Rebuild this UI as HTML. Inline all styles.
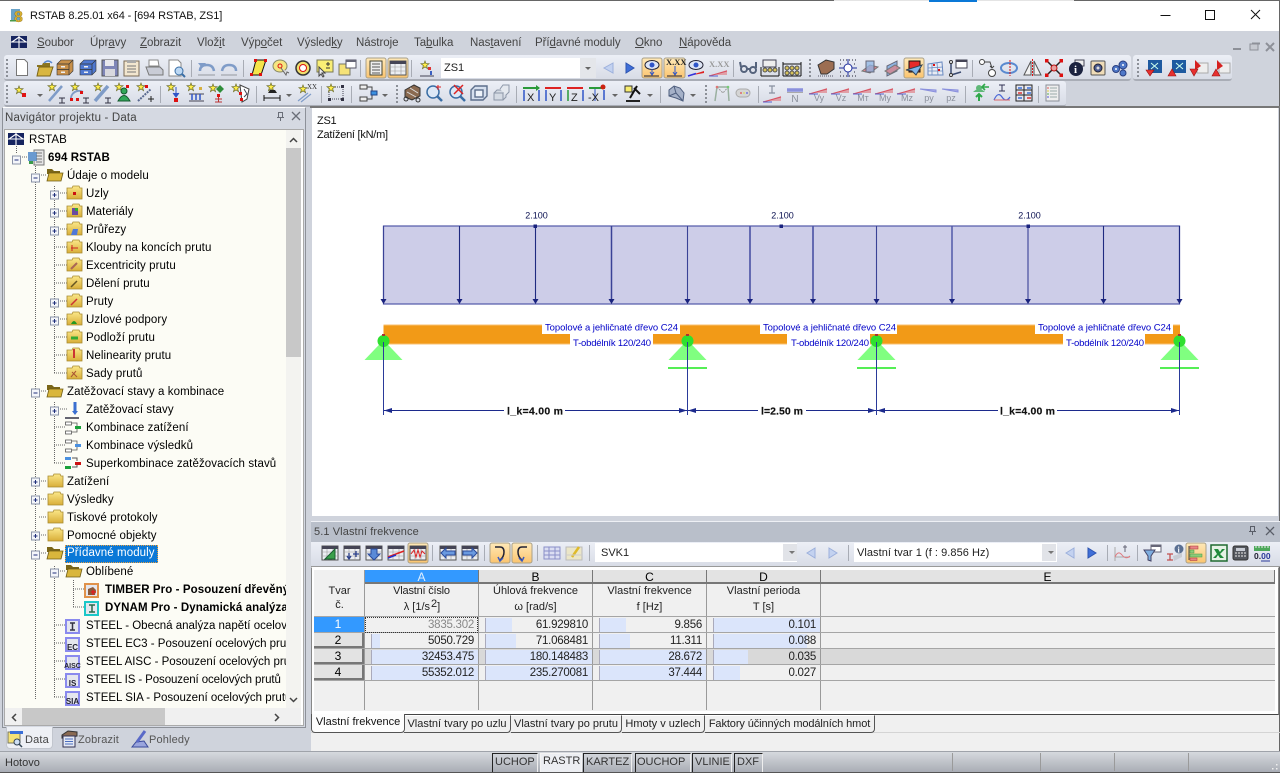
<!DOCTYPE html>
<html lang="cs"><head><meta charset="utf-8"><title>RSTAB 8.25.01 x64 - [694 RSTAB, ZS1]</title>
<style>
html,body{margin:0;padding:0;width:1280px;height:773px;overflow:hidden;background:#cfd3dc;font:11px "Liberation Sans",sans-serif;color:#000}
div,span,i{position:absolute;box-sizing:border-box;white-space:nowrap}
u,b{position:static}
i{display:block}
.m{top:31px;height:24px;line-height:25px;color:#444;font-size:11.5px;letter-spacing:-.05px}
.tb{background:linear-gradient(#ecEff6,#d8dce6);border-bottom:2px solid #a9adb6;border-radius:3px}
.t{height:18px;line-height:18px;letter-spacing:.09px;font-size:11.5px;margin-top:1px}
.hd{background:#e3e3e3;border-right:1px solid #777;border-bottom:2px solid #777;text-align:center;line-height:14px;font-size:12px;height:14px;top:570px}
.h2{text-align:center;width:113px;line-height:16px;color:#222;font-size:11px}
.c{height:15px;width:113px;line-height:16px;text-align:right;padding-right:4px;font-size:11.5px;color:#222;letter-spacing:-.25px}
.c i{top:1px;height:14px;left:6px;background:#dbe5fb;border-left:1px solid #aab}
.c span{position:relative}
.r{left:314px;width:50px;height:15px;background:#e3e3e3;border-right:2px solid #777;border-bottom:2px solid #777;text-align:center;line-height:14px;font-size:12px}
.vl{width:1px;background:#9a9a9a}.hl{height:1px;background:#a5a5a5;left:314px;width:961px}
.tab{top:715px;height:18px;background:#f0f0f0;border:1px solid #555;border-top:1px solid #fff;border-left:0;border-radius:0 0 4px 0;line-height:17px;text-align:center;color:#222;font-size:11px}
.st{top:753px;height:19px;border:1px solid #222;border-bottom:0;border-right-color:#eee;line-height:17px;padding-left:2px;color:#333;font-size:11px}
.ic{left:0;top:0;position:absolute}
</style></head><body>

<!-- title bar -->
<div style="left:0;top:0;width:1280px;height:31px;background:#fff"></div>
<div style="left:0;top:0;width:834px;height:1px;background:#666"></div>
<div style="left:834px;top:0;width:95px;height:1px;background:#e4e4e4"></div>
<div style="left:929px;top:0;width:48px;height:2px;background:#0a78d7"></div>
<div style="left:977px;top:0;width:97px;height:1px;background:#e4e4e4"></div>
<div style="left:1074px;top:0;width:206px;height:1px;background:#666"></div>
<div style="left:1279px;top:0;width:1px;height:773px;background:#666"></div>
<div style="left:30px;top:7px;line-height:18px;font-size:11px;letter-spacing:-.1px;color:#111">RSTAB 8.25.01 x64 - [694 RSTAB, ZS1]</div>

<!-- menu -->
<div class="m" style="left:37px"><u>S</u>oubor</div>
<div class="m" style="left:90px">Úpr<u>a</u>vy</div>
<div class="m" style="left:140px"><u>Z</u>obrazit</div>
<div class="m" style="left:197px">Vlož<u>i</u>t</div>
<div class="m" style="left:241px">Výp<u>o</u>čet</div>
<div class="m" style="left:297px">Výsled<u>k</u>y</div>
<div class="m" style="left:356px">Nástro<u>j</u>e</div>
<div class="m" style="left:414px">Ta<u>b</u>ulka</div>
<div class="m" style="left:470px">Nas<u>t</u>avení</div>
<div class="m" style="left:535px">Pří<u>d</u>avné moduly</div>
<div class="m" style="left:635px"><u>O</u>kno</div>
<div class="m" style="left:679px"><u>N</u>ápověda</div>

<!-- toolbars -->
<div class="tb" style="left:4px;top:55px;width:1127px;height:26px"></div>
<div class="tb" style="left:1133px;top:55px;width:99px;height:26px"></div>
<div class="tb" style="left:4px;top:81px;width:1062px;height:26px"></div>

<!-- combo in toolbar -->
<div style="left:441px;top:58px;width:155px;height:20px;background:#fff;line-height:21px;padding-left:3px;color:#222">ZS1</div>
<div style="left:580px;top:58px;width:16px;height:20px;background:#e4e6ea"></div>

<!-- navigator -->
<div style="left:2px;top:107px;width:304px;height:621px;background:#d5d9e2;border:1px solid #8d9199;border-top-color:#fff"></div>
<div style="left:5px;top:109px;line-height:19px;color:#444;font-size:11.5px;letter-spacing:.16px">Navigátor projektu - Data</div>
<div style="left:4px;top:129px;width:300px;height:597px;background:#fff;border:1px solid #aaa"></div>
<div style="left:5px;top:130px;width:281px;height:578px;background:#fcfcf5;overflow:hidden">
 <div class="t" style="left:24px;top:0">RSTAB</div>
 <div class="t" style="left:43px;top:18px;font-weight:bold">694 RSTAB</div>
 <div class="t" style="left:62px;top:36px">Údaje o modelu</div>
 <div class="t" style="left:81px;top:54px">Uzly</div>
 <div class="t" style="left:81px;top:72px">Materiály</div>
 <div class="t" style="left:81px;top:90px">Průřezy</div>
 <div class="t" style="left:81px;top:108px">Klouby na koncích prutu</div>
 <div class="t" style="left:81px;top:126px">Excentricity prutu</div>
 <div class="t" style="left:81px;top:144px">Dělení prutu</div>
 <div class="t" style="left:81px;top:162px">Pruty</div>
 <div class="t" style="left:81px;top:180px">Uzlové podpory</div>
 <div class="t" style="left:81px;top:198px">Podloží prutu</div>
 <div class="t" style="left:81px;top:216px">Nelinearity prutu</div>
 <div class="t" style="left:81px;top:234px">Sady prutů</div>
 <div class="t" style="left:62px;top:252px">Zatěžovací stavy a kombinace</div>
 <div class="t" style="left:81px;top:270px">Zatěžovací stavy</div>
 <div class="t" style="left:81px;top:288px">Kombinace zatížení</div>
 <div class="t" style="left:81px;top:306px">Kombinace výsledků</div>
 <div class="t" style="left:81px;top:324px">Superkombinace zatěžovacích stavů</div>
 <div class="t" style="left:62px;top:342px">Zatížení</div>
 <div class="t" style="left:62px;top:360px">Výsledky</div>
 <div class="t" style="left:62px;top:378px">Tiskové protokoly</div>
 <div class="t" style="left:62px;top:396px">Pomocné objekty</div>
 <div class="t" style="left:60px;top:414px;width:93px;height:18px;padding-left:2px;background:#0a78d7;color:#fff;outline:1px dotted #e8a040;outline-offset:-1px;line-height:17px">Přídavné moduly</div>
 <div class="t" style="left:81px;top:432px">Oblíbené</div>
 <div class="t" style="left:100px;top:450px;font-weight:bold">TIMBER Pro - Posouzení dřevěných prutů</div>
 <div class="t" style="left:100px;top:468px;font-weight:bold">DYNAM Pro - Dynamická analýza konstrukcí</div>
 <div class="t" style="left:81px;top:486px;letter-spacing:0">STEEL - Obecná analýza napětí ocelových prutů</div>
 <div class="t" style="left:81px;top:504px;letter-spacing:0">STEEL EC3 - Posouzení ocelových prutů</div>
 <div class="t" style="left:81px;top:522px;letter-spacing:0">STEEL AISC - Posouzení ocelových prutů</div>
 <div class="t" style="left:81px;top:540px;letter-spacing:-.1px">STEEL IS - Posouzení ocelových prutů</div>
 <div class="t" style="left:81px;top:558px;letter-spacing:0">STEEL SIA - Posouzení ocelových prutů</div>
</div>
<!-- scrollbars -->
<div style="left:286px;top:130px;width:15px;height:578px;background:#f3f3f0"></div>
<div style="left:286px;top:148px;width:15px;height:209px;background:#c8c8c8"></div>
<div style="left:5px;top:708px;width:296px;height:17px;background:#f0f0f0"></div>
<div style="left:22px;top:708px;width:143px;height:17px;background:#c8c8c8"></div>

<!-- nav tabs -->
<div style="left:6px;top:727px;width:47px;height:22px;background:#eef0f5;border:1px solid #c2c6ce;border-top:0;border-radius:0 0 4px 4px"></div>
<div style="left:25px;top:730px;line-height:20px;color:#444;letter-spacing:.15px">Data</div>
<div style="left:78px;top:730px;line-height:20px;color:#555;letter-spacing:.15px">Zobrazit</div>
<div style="left:149px;top:730px;line-height:20px;color:#555;letter-spacing:.15px">Pohledy</div>

<!-- main view -->
<div style="left:310px;top:106px;width:970px;height:2px;background:#777"></div>
<div style="left:312px;top:108px;width:966px;height:408px;background:#fff"></div>
<div style="left:317px;top:114px;font-size:11px;line-height:14px;color:#111;letter-spacing:-.25px">ZS1<br>Zatížení [kN/m]</div>

<!-- result panel -->
<div style="left:311px;top:521px;width:969px;height:21px;background:#b9bfca;border-top:1px solid #eef0f5"></div>
<div style="left:314px;top:523px;line-height:19px;color:#444;letter-spacing:.1px">5.1 Vlastní frekvence</div>
<div style="left:311px;top:542px;width:969px;height:25px;background:linear-gradient(#ecEff6,#d8dce6);border-bottom:1px solid #999"></div>
<div style="left:595px;top:543px;width:202px;height:19px;background:#fff;line-height:20px;padding-left:6px;color:#222">SVK1</div>
<div style="left:783px;top:544px;width:14px;height:17px;background:#e1e3e8"></div>
<div style="left:854px;top:543px;width:203px;height:19px;background:#fff;line-height:20px;padding-left:3px;color:#222;letter-spacing:.05px">Vlastní tvar 1 (f : 9.856 Hz)</div>
<div style="left:1042px;top:544px;width:14px;height:17px;background:#e1e3e8"></div>

<!-- table -->
<div style="left:311px;top:567px;width:968px;height:148px;background:#fff;border:1px solid #888;border-top:1px solid #fff;border-bottom:1px solid #444"></div>
<div style="left:314px;top:570px;width:961px;height:141px;background:#f0f0f0"></div>
<div style="left:314px;top:649px;width:961px;height:16px;background:#d9d9d9"></div>
<div class="hd" style="left:365px;width:114px;background:#3399ff;color:#dfefff">A</div>
<div class="hd" style="left:479px;width:114px">B</div>
<div class="hd" style="left:593px;width:114px">C</div>
<div class="hd" style="left:707px;width:114px">D</div>
<div class="hd" style="left:821px;width:454px">E</div>
<div class="vl" style="left:364px;top:570px;height:140px"></div>
<div class="vl" style="left:478px;top:584px;height:126px"></div>
<div class="vl" style="left:592px;top:584px;height:126px"></div>
<div class="vl" style="left:706px;top:584px;height:126px"></div>
<div class="vl" style="left:820px;top:584px;height:126px"></div>
<div class="hl" style="top:616px"></div><div class="hl" style="top:632px"></div><div class="hl" style="top:648px"></div><div class="hl" style="top:664px"></div><div class="hl" style="top:680px"></div>
<div class="h2" style="left:283px;top:583px">Tvar</div>
<div class="h2" style="left:283px;top:597px">č.</div>
<div class="h2" style="left:365px;top:583px;letter-spacing:-.2px">Vlastní číslo</div>
<div class="h2" style="left:365px;top:599px">λ [1/s<span style="position:relative;top:-3px;left:1px">2</span><span style="position:relative;left:1px">]</span></div>
<div class="h2" style="left:479px;top:583px">Úhlová frekvence</div>
<div class="h2" style="left:479px;top:599px">ω [rad/s]</div>
<div class="h2" style="left:593px;top:583px">Vlastní frekvence</div>
<div class="h2" style="left:593px;top:599px">f [Hz]</div>
<div class="h2" style="left:707px;top:583px">Vlastní perioda</div>
<div class="h2" style="left:707px;top:599px">T [s]</div>

<div class="r" style="top:617px;background:#3399ff;color:#fff;border-color:#3399ff">1</div>
<div class="r" style="top:633px">2</div>
<div class="r" style="top:649px">3</div>
<div class="r" style="top:665px">4</div>

<div class="c" style="left:365px;top:617px;color:#888;outline:1px dotted #333;outline-offset:-1px;height:16px"><span>3835.302</span></div>
<div class="c" style="left:479px;top:617px"><i style="width:27px"></i><span>61.929810</span></div>
<div class="c" style="left:593px;top:617px"><i style="width:27px"></i><span>9.856</span></div>
<div class="c" style="left:707px;top:617px"><i style="width:107px"></i><span>0.101</span></div>
<div class="c" style="left:365px;top:633px"><i style="width:9px"></i><span>5050.729</span></div>
<div class="c" style="left:479px;top:633px"><i style="width:31px"></i><span>71.068481</span></div>
<div class="c" style="left:593px;top:633px"><i style="width:31px"></i><span>11.311</span></div>
<div class="c" style="left:707px;top:633px"><i style="width:94px"></i><span>0.088</span></div>
<div class="c" style="left:365px;top:649px"><i style="width:107px"></i><span>32453.475</span></div>
<div class="c" style="left:479px;top:649px"><i style="width:107px"></i><span>180.148483</span></div>
<div class="c" style="left:593px;top:649px"><i style="width:107px"></i><span>28.672</span></div>
<div class="c" style="left:707px;top:649px"><i style="width:35px"></i><span>0.035</span></div>
<div class="c" style="left:365px;top:665px"><i style="width:107px"></i><span>55352.012</span></div>
<div class="c" style="left:479px;top:665px"><i style="width:107px"></i><span>235.270081</span></div>
<div class="c" style="left:593px;top:665px"><i style="width:107px"></i><span>37.444</span></div>
<div class="c" style="left:707px;top:665px"><i style="width:27px"></i><span>0.027</span></div>

<!-- sheet tabs -->
<div style="left:311px;top:715px;width:968px;height:37px;background:#f0f0f0"></div>
<div style="left:311px;top:732px;width:969px;height:1px;background:#d4d4d4"></div>
<div class="tab" style="left:404px;width:107px">Vlastní tvary po uzlu</div>
<div class="tab" style="left:511px;width:111px">Vlastní tvary po prutu</div>
<div class="tab" style="left:622px;width:83px">Hmoty v uzlech</div>
<div class="tab" style="left:705px;width:170px;letter-spacing:-.1px">Faktory účinných modálních hmot</div>
<div class="tab" style="left:311px;width:94px;height:19px;top:714px;background:#fdfdfd;border-left:1px solid #555;border-top:0;border-radius:0 0 4px 4px;color:#111">Vlastní frekvence</div>

<!-- status bar -->
<div style="left:0;top:751px;width:1280px;height:1px;background:#9fa3aa"></div>
<div style="left:0;top:752px;width:1280px;height:20px;background:linear-gradient(#d6d9de,#a9adb5)"></div>
<div style="left:0;top:772px;width:1280px;height:1px;background:#555"></div>
<div style="left:5px;top:753px;line-height:20px;color:#333">Hotovo</div>
<div class="st" style="left:492px;width:46px">UCHOP</div>
<div class="st" style="left:540px;width:42px;background:#eceef2;border-color:#f4f4f4;line-height:14px;color:#333">RASTR</div>
<div class="st" style="left:583px;width:49px">KARTEZ</div>
<div class="st" style="left:635px;width:56px;padding-left:1px">OUCHOP</div>
<div class="st" style="left:692px;width:40px">VLINIE</div>
<div class="st" style="left:734px;width:29px">DXF</div>
<div class="vl" style="left:952px;top:753px;height:18px"></div><div class="vl" style="left:1040px;top:753px;height:18px"></div><div class="vl" style="left:1114px;top:753px;height:18px"></div><div class="vl" style="left:1188px;top:753px;height:18px"></div>

<!-- vector overlay -->
<svg class="ic" width="1280" height="773" viewBox="0 0 1280 773" xmlns="http://www.w3.org/2000/svg">
<defs>
<linearGradient id="pr" x1="0" y1="0" x2="0" y2="1"><stop offset="0" stop-color="#ffe9b8"/><stop offset="1" stop-color="#fbc46e"/></linearGradient>
<linearGradient id="fo" x1="0" y1="0" x2="0" y2="1"><stop offset="0" stop-color="#fbe88a"/><stop offset="1" stop-color="#d8ae38"/></linearGradient>
<path id="star" d="M0-4 1-1.300 4-1.300 1.600.6 2.500 3.600 0 1.800-2.500 3.600-1.600.6-4-1.300-1-1.300Z" fill="#ffef4a" stroke="#6a6a20" stroke-width=".7"/>
<rect id="rs" x="-2" y="-2" width="4" height="4" fill="#e01515"/>
<g id="fold"><path d="M0 3h5l1-2h6l1 2h2v11H0Z" fill="url(#fo)" stroke="#a88a30" stroke-width=".8"/></g>
<g id="fopen"><path d="M0 2h5l2 2h6v3H0Z" fill="#7a6618"/><path d="M0 14 2 6h14l-2 8Z" fill="#d9b63c" stroke="#6f5c14" stroke-width=".8"/></g>
<g id="plus"><rect x="-4" y="-4" width="8" height="8" fill="#f4f6fa" stroke="#8a93a8"/><path d="M-2 0h4M0-2v4" stroke="#1f2f7a"/></g>
<g id="minus"><rect x="-4" y="-4" width="8" height="8" fill="#f4f6fa" stroke="#8a93a8"/><path d="M-2 0h4" stroke="#1f2f7a"/></g>
<g id="flag"><rect x="0" y="0" width="16" height="12" fill="#16245f"/><path d="M0 6h16M8 0v12M1 6 8 1l7 5" stroke="#fff" fill="none" stroke-width="1.100"/></g>
<g id="drw"><path d="M1 6 5 2h12v11l-4 4H1Z" fill="currentColor" stroke="#333" stroke-width=".6"/><path d="M1 6h12v11M13 6l4-4M1 11.500h12" stroke="#333" stroke-width=".7" fill="none"/><rect x="5" y="8" width="4" height="1.500" fill="#eee"/><rect x="5" y="13.500" width="4" height="1.500" fill="#eee"/></g>
<g id="loadar"><path d="M-3 0H3L0 5Z" fill="#1a237e"/></g>
<g id="sup"><path d="M0-1 19 19H-19Z" fill="#80ff80"/><circle r="6" cy="0" fill="#2fe02f"/><rect x="-1.500" y="-7" width="3" height="2" fill="#a33"/></g>
<g id="forces"><path d="M-9 8 9 2v5H-9Z" fill="#e0a0a8"/><path d="M-9 8 9 3" stroke="#d85060"/><path d="M-9 8h9" stroke="#5560d0"/></g>
<g id="grip"><rect y="0" width="2" height="2" fill="#8c9098"/><rect y="4" width="2" height="2" fill="#8c9098"/><rect y="8" width="2" height="2" fill="#8c9098"/><rect y="12" width="2" height="2" fill="#8c9098"/><rect y="16" width="2" height="2" fill="#8c9098"/></g>
<g id="dd"><path d="M-3 0h6L0 3Z" fill="#666"/></g>
<g id="tbl"><rect x="-8" y="-7" width="16" height="14" fill="#eceef2" stroke="#555"/><rect x="-8" y="-7" width="16" height="3" fill="#445"/><path d="M-8-1h16M-8 3h16M-3-4v11M3-4v11" stroke="#999" stroke-width=".6"/></g>
</defs>

<!-- window controls -->
<path d="M1160.500 15.500h10" stroke="#111"/><rect x="1205.500" y="10.500" width="9" height="9" fill="none" stroke="#111"/><path d="M1251 10l9 9M1260 10l-9 9" stroke="#111"/>
<!-- title icon -->
<rect x="11" y="9" width="9" height="11" fill="#6aa3c8"/><text x="14" y="22" font-size="16" font-weight="bold" fill="#d8b030" font-family="Liberation Sans" stroke="#806010" stroke-width=".3">8</text><rect x="10" y="20" width="6" height="1.500" fill="#4a9a4a"/>
<!-- menu flag -->
<use href="#flag" x="11" y="36"/>
<!-- mdi -->
<path d="M1233 49h8" stroke="#8d9098" stroke-width="2"/><rect x="1250" y="44" width="8" height="6" fill="#c6c9d0" stroke="#8d9098"/><rect x="1252" y="42.500" width="8" height="2" fill="#8d9098"/><path d="M1266 43l8 8M1274 43l-8 8" stroke="#8d9098" stroke-width="2"/>

<!-- grips -->
<use href="#grip" x="6" y="59"/><use href="#grip" x="6" y="85"/><use href="#grip" x="809" y="59"/><use href="#grip" x="1137" y="59"/><use href="#grip" x="396" y="85"/><use href="#grip" x="705" y="85"/>

<!-- separators -->
<path stroke="#a8acb5" d="M191.500 60v17M243.500 60v17M360.500 60v17M411.500 60v17M733.500 60v17M972.500 60v17M160.500 86v17M256.500 86v17M321.500 86v17M351.500 86v17M516.500 86v17M660.500 86v17M758.500 86v17M965.500 86v17M1038.500 86v17M432.500 545v16M484.500 545v16M537.500 545v16M589.500 545v16M848.500 545v16M1107.500 545v16M1137.500 545v16"/>

<!-- pressed buttons row 1 -->
<rect x="366" y="58" width="20" height="20" rx="2" fill="url(#pr)" stroke="#a9a089"/><rect x="388" y="58" width="20" height="20" rx="2" fill="url(#pr)" stroke="#a9a089"/>
<rect x="642" y="58" width="20" height="20" rx="2" fill="url(#pr)" stroke="#a9a089"/><rect x="664" y="58" width="21" height="20" rx="2" fill="url(#pr)" stroke="#a9a089"/>
<rect x="904" y="58" width="20" height="20" rx="2" fill="url(#pr)" stroke="#a9a089"/>
<!-- pressed bottom -->
<rect x="408" y="543" width="20" height="20" rx="2" fill="url(#pr)" stroke="#a9a089"/><rect x="490" y="543" width="20" height="20" rx="2" fill="url(#pr)" stroke="#a9a089"/><rect x="512" y="543" width="20" height="20" rx="2" fill="url(#pr)" stroke="#a9a089"/><rect x="1186" y="543" width="20" height="20" rx="2" fill="url(#pr)" stroke="#a9a089"/>

<!-- row 1 icons -->
<path d="M16.500 59.500h8l3 3v13h-11Z" fill="#fff" stroke="#777"/>
<g transform="translate(35 59)"><path d="M2 6h5l1-2h7v4H2Z" fill="#8a7520"/><path d="M2 17 4 8h14l-3 9Z" fill="#d8b640" stroke="#7a6418"/><path d="M9 4q4-4 8 0" stroke="#5a8ad0" stroke-width="1.500" fill="none"/></g>
<use href="#drw" x="56" y="58" color="#c8904a"/><use href="#drw" x="79" y="58" color="#4f78d0"/>
<g transform="translate(102 60)"><rect width="16" height="16" fill="#7f86b8" stroke="#555"/><rect x="3" width="9" height="6" fill="#e8e8ee"/><rect x="3" y="9" width="10" height="7" fill="#d8d8de"/></g>
<g transform="translate(124 60)"><rect y="1" width="15" height="15" fill="#f2e6cf" stroke="#7a6a55"/><rect x="3" width="9" height="3" fill="#aaa"/><path d="M3 6h9M3 9h9M3 12h9" stroke="#777"/></g>
<g transform="translate(146 60)"><path d="M3 0h9l1 6H3Z" fill="#fff" stroke="#888"/><path d="M0 7h14l3 3v5H3Z" fill="#c9ccd6" stroke="#777"/></g>
<g transform="translate(168 59)"><path d="M1 1h9l3 3v13H1Z" fill="#fff" stroke="#888"/><circle cx="11" cy="12" r="4" fill="#bcd8f4" stroke="#3a6ea5"/><path d="M14 15l3 3" stroke="#3a6ea5" stroke-width="2"/></g>
<g fill="none" stroke="#7f9cc8" stroke-width="2.500"><path d="M200 71q0-6 7-6 6 0 7 6"/><path d="M222 71q1-6 7-6 7 0 7 6"/></g>
<path d="M198 63l4 5 4-5Z M214 65h-1" fill="#7f9cc8"/><path d="M198 75h17M221 75h16" stroke="#b8bcc4" stroke-width="2"/>
<path d="M252 75 256 60h10l-5 15Z" fill="#f5e44a" stroke="#111"/><rect x="250" y="73" width="3" height="3" fill="#d11"/><rect x="259" y="73" width="3" height="3" fill="#d11"/><rect x="264" y="59" width="3" height="3" fill="#d11"/><rect x="254" y="59" width="3" height="3" fill="#d11"/>
<ellipse cx="280" cy="66" rx="7" ry="6" fill="#f5e680" stroke="#886"/><circle cx="280" cy="66" r="2" fill="none" stroke="#d11"/><path d="M281 68l5 7 1-3 2 1" fill="#ddd" stroke="#666"/>
<circle cx="303" cy="68" r="7" fill="#f1df6e" stroke="#333" stroke-width="1.500"/><circle cx="303" cy="68" r="3.500" fill="#fff" stroke="#d11"/>
<rect x="317" y="60" width="16" height="12" fill="#f9ee75" stroke="#775"/><path d="M326 64h4M328 62v4M326 68h4" stroke="#333"/><path d="M319 67v9l2-2 2 3 1-1-2-3h3Z" fill="#eee" stroke="#444"/>
<rect x="339" y="64" width="11" height="11" fill="#f5e277" stroke="#776"/><rect x="346" y="60" width="10" height="8" fill="#fff" stroke="#556"/><rect x="346" y="60" width="10" height="2" fill="#667"/>
<g transform="translate(376 68)"><rect x="-6" y="-7" width="12" height="14" fill="#eee" stroke="#443"/><path d="M-4-4h8M-4-1h8M-4 2h8M-4 5h8" stroke="#555"/></g>
<use href="#tbl" x="398" y="68"/>
<use href="#star" x="425" y="65"/><rect x="428" y="67" width="3" height="3" fill="#d33"/><path d="M420 76h14" stroke="#445"/><path d="M431 71v4" stroke="#3a5fc0" stroke-width="2"/>
<path d="M589 67h6l-3 3Z" fill="#666" transform="translate(-4 0)"/>
<path d="M613 63 604 68l9 5Z" fill="#c3d2f0" stroke="#9cb0dc"/><path d="M626 63l8 5-8 5Z" fill="#3f6fd8" stroke="#2d54b0"/>
<g transform="translate(652 68)"><ellipse cy="-3" rx="7" ry="4.500" fill="#dfe6f6" stroke="#223"/><circle cy="-3" r="2.500" fill="#2f55c8"/><path d="M0 1v5M-2 4l2 3 2-3" stroke="#2f55c8" fill="none"/><path d="M-8 8h15" stroke="#223"/></g>
<g transform="translate(675 68)"><text x="-9" y="-3" font-size="8.500" font-family="Liberation Serif" font-weight="bold" fill="#222">X.XX</text><path d="M0-2v8M-2 4l2 3 2-3" stroke="#2f55c8" fill="none"/><path d="M-8 8h15" stroke="#223"/></g>
<g transform="translate(696 68)"><ellipse cy="-3" rx="7" ry="4.500" fill="#dfe6f6" stroke="#223"/><circle cy="-3" r="2.500" fill="#2f55c8"/><path d="M-8 8 8 3v2L-8 8Z" fill="#d22"/><path d="M-8 8 0 5.500" stroke="#33d" stroke-width="1.500"/></g>
<g transform="translate(718 68)"><text x="-9" y="-1" font-size="8.500" font-family="Liberation Serif" font-weight="bold" fill="#999">X.XX</text><use href="#forces" y="0"/></g>
<g transform="translate(748 68)" stroke="#55637c" fill="none" stroke-width="2"><circle cx="-4" cy="1" r="3"/><circle cx="5" cy="2" r="3"/><path d="M-1 1h3M-7-1-8-6M8 0 8-6"/></g>
<g transform="translate(770 68)"><rect x="-7" y="-8" width="13" height="7" fill="#eee" stroke="#445"/><path d="M-9 8h18M-9-1v9M9-1v9" stroke="#111"/><circle cx="-5" cy="2" r="2" fill="#d6c25a" stroke="#555"/><circle cx="0" cy="2" r="2" fill="#d6c25a" stroke="#555"/><circle cx="5" cy="2" r="2" fill="#d6c25a" stroke="#555"/></g>
<g transform="translate(792 68)"><path d="M-9 8h18M-9-6v14M9-6v14M-9-4h18" stroke="#111"/><circle cx="-5" cy="0" r="2" fill="#d6c25a" stroke="#555"/><circle cx="0" cy="0" r="2" fill="#d6c25a" stroke="#555"/><circle cx="5" cy="0" r="2" fill="#d6c25a" stroke="#555"/><circle cx="-5" cy="5" r="2" fill="#d6c25a" stroke="#555"/><circle cx="0" cy="5" r="2" fill="#d6c25a" stroke="#555"/><circle cx="5" cy="5" r="2" fill="#d6c25a" stroke="#555"/></g>
<g transform="translate(826 68)"><path d="M-8-3 0-8 8-6v7L1 6H-5Z" fill="#9c6e52" stroke="#333"/><path d="M-8 8h16" stroke="#556" stroke-dasharray="1 1"/></g>
<g transform="translate(848 68)" stroke="#1f2f9c"><circle r="4" fill="#fff"/><path d="M-9 0h5M4 0h5M0-9v5M0 4v5" /><path d="M-8-8h16M-8 8h16M-8-4h2M6-4h2M-8 4h2M6 4h2" stroke="#223" stroke-dasharray="1 2"/></g>
<g transform="translate(870 68)"><path d="M-8 3 0-3 8-1 0 5Z" fill="#d8838c" stroke="#777"/><path d="M-4-7h8v11h-8Z" fill="#8eb4e3" fill-opacity=".75" stroke="#667"/></g>
<g transform="translate(892 68)"><path d="M-5-2 5-7V3L-5 8Z" fill="#8eb4e3" stroke="#667"/><path d="M-7 3 3-3 8 0-2 6Z" fill="#d8838c" fill-opacity=".8" stroke="#777"/></g>
<g transform="translate(914 68)"><rect x="-5" y="-7" width="11" height="11" fill="#e62a2a" stroke="#111"/><path d="M-8 2 8-3 2 7-2 3Z" fill="#7fb4ea" stroke="#345"/></g>
<g transform="translate(935 68)"><path d="M-7-4 7-6 8 7H-7Z" fill="#e8ecf4" stroke="#6a8ac0"/><path d="M-7 0 8-1M-7 3h15M-3-5l0 12M2-5l1 12" stroke="#6a8ac0" stroke-width=".8"/><rect x="-2" y="-4" width="2" height="2" fill="#d11"/><rect x="3" y="1" width="2" height="2" fill="#d11"/></g>
<g transform="translate(958 68)"><rect x="-2" y="-8" width="11" height="8" fill="#fff" stroke="#445"/><rect x="-2" y="-8" width="11" height="2" fill="#445"/><path d="M-7-6V7M-7 7 3 4" stroke="#3a4a70" stroke-width="1.500" fill="none"/><circle cx="-7" cy="-6" r="1.500" fill="#fff" stroke="#333"/><circle cx="-7" cy="7" r="1.500" fill="#fff" stroke="#333"/></g>
<g transform="translate(988 68)" fill="#fff" stroke="#444"><circle cx="-6" cy="-6" r="2.500"/><circle cx="4" cy="5" r="3.500"/><path d="M-3-6h5l2 6M2-2l2 2 2-2" fill="none"/></g>
<g transform="translate(1009 68)"><ellipse rx="8" ry="5" fill="none" stroke="#5a8ad0" stroke-width="2"/><path d="M1-8V8" stroke="#d11" stroke-dasharray="2 1"/></g>
<g transform="translate(1032 68)"><path d="M-1-7-8 7h7ZM2-7l7 14H2Z" fill="#f2f2f2" stroke="#555"/><path d="M.5-9V9" stroke="#d11" stroke-dasharray="2 1"/></g>
<g transform="translate(1054 68)"><path d="M-7-7 7 7M7-7-7 7" stroke="#222" stroke-width="1.500"/><circle r="3" fill="#e8a0a0" stroke="#b11"/><rect x="-9" y="-9" width="3.500" height="3.500" fill="#d11"/><rect x="5.500" y="-9" width="3.500" height="3.500" fill="#d11"/><rect x="-9" y="5.500" width="3.500" height="3.500" fill="#d11"/><rect x="5.500" y="5.500" width="3.500" height="3.500" fill="#d11"/></g>
<g transform="translate(1076 68)"><rect x="-1" y="-8" width="9" height="6" fill="#eee" stroke="#445"/><circle cy="1" r="7" fill="#1c2340"/><text x="-2" y="5" font-size="11" font-weight="bold" fill="#fff" font-family="Liberation Serif">i</text></g>
<g transform="translate(1098 68)"><rect x="-7" y="-7" width="14" height="14" rx="1" fill="#efdcb8" stroke="#555"/><rect x="-5" y="-8" width="10" height="2" fill="#999"/><circle r="4" fill="#4a5a8f" stroke="#223"/><circle r="1.500" fill="#ddd"/></g>
<g transform="translate(1120 68)"><circle cx="3" cy="-3" r="4" fill="#4f78c8" stroke="#2a3f80"/><circle cx="-4" cy="1" r="3.500" fill="#4f78c8" stroke="#2a3f80"/><circle cx="3" cy="5" r="3" fill="#4f78c8" stroke="#2a3f80"/><circle cx="3" cy="-3" r="1" fill="#fff"/><circle cx="-4" cy="1" r="1" fill="#fff"/></g>
<g transform="translate(1154 68)"><rect x="-6" y="-8" width="14" height="13" fill="#1e5aa0"/><path d="M-3-5 4 1M4-5-3 1" stroke="#cfe" /><path d="M-8 2H0L-4 8Z" fill="#e63030" stroke="#911" stroke-width=".6"/></g>
<g transform="translate(1177 68)"><rect x="-5" y="-8" width="14" height="13" fill="#1e5aa0"/><path d="M-1-5 6 1M6-5-1 1" stroke="#cfe"/><path d="M-5 1-9 8H-1Z" fill="#e63030" stroke="#911" stroke-width=".6"/></g>
<g transform="translate(1198 68)"><rect x="-1" y="-5" width="11" height="10" fill="#eee" stroke="#aaa"/><path d="M-3-8 3-2-3 2Z" fill="#d62020"/><path d="M-8 1H0L-4 8Z" fill="#e63030" stroke="#911" stroke-width=".6"/></g>
<g transform="translate(1220 68)"><rect x="-1" y="-5" width="11" height="10" fill="#eee" stroke="#aaa"/><path d="M-3-8 3-2-3 2Z" fill="#d62020"/><path d="M-4 1-8 8H0Z" fill="#e63030" stroke="#911" stroke-width=".6"/></g>

<!-- row 2 icons -->
<use href="#star" x="19" y="90"/><use href="#rs" x="24" y="95"/><use href="#dd" x="40" y="94"/>
<g transform="translate(56 93)"><use href="#star" x="-4" y="-6"/><path d="M-7 8 6-7" stroke="#7f9cc8" stroke-width="2.500"/><path d="M3 5h6M6 5v5M3 10h6" stroke="#334" /></g>
<g transform="translate(79 93)"><use href="#star" x="-4" y="-6"/><path d="M-8 7a8 8 0 0 1 12-8" fill="none" stroke="#7f9cc8" stroke-width="2"/><rect x="-9" y="5" width="3" height="3" fill="#d11"/><rect x="1" y="-2" width="3" height="3" fill="#d11"/><rect x="-3" y="5" width="3" height="3" fill="#d11"/><path d="M4 5h6M7 5v5M4 10h6" stroke="#334"/></g>
<g transform="translate(102 93)"><use href="#star" x="-4" y="-6"/><path d="M-7 8 6-7" stroke="#7f9cc8" stroke-width="3.500"/><path d="M3 5h6M6 5v5M3 10h6" stroke="#334"/></g>
<g transform="translate(124 93)"><use href="#star" x="-5" y="-6"/><path d="M-6 8q6-11 12 0Z" fill="#32a85a" stroke="#14592e"/><circle cy="-2" r="3" fill="#32a85a" stroke="#14592e"/><rect x="2" y="-8" width="3" height="3" fill="#d11"/></g>
<g transform="translate(146 93)"><use href="#star" x="-5" y="-6"/><path d="M-8 8 5-4" stroke="#5a6a90" stroke-dasharray="2 1" stroke-width="2"/><rect x="-1" y="-8" width="3" height="3" fill="#d11"/><path d="M2 6h6M5 3v6" stroke="#222"/></g>
<g transform="translate(175 93)"><use href="#star" x="-4" y="-6"/><path d="M1-6V2M-2 0l3 4 3-4" stroke="#2f55c8" fill="#2f55c8"/><rect x="-1" y="5" width="4" height="4" fill="#d11"/></g>
<g transform="translate(196 93)"><use href="#star" x="-5" y="-6"/><path d="M-7 1h15M-7 8h15" stroke="#445"/><path d="M-4 1v6M0 1v6M4 1v6" stroke="#2f55c8" stroke-width="1.500"/><rect x="3" y="-6" width="3" height="3" fill="#d6b040"/></g>
<g transform="translate(218 93)"><use href="#star" x="-5" y="-5"/><path d="M-2-4 2-8 6-4 2 0Z" fill="#2f8d3a"/><rect x="-1" y="1" width="3" height="3" fill="#d11"/><path d="M-3 6h7M.5 4v5M-3 9h7" stroke="#b33"/></g>
<g transform="translate(241 93)"><use href="#star" x="-5" y="-5"/><path d="M-1-8 8-4 6 6 1 9Z" fill="#fff" stroke="#444"/><rect x="-2" y="-1" width="3" height="3" fill="#d11"/><rect x="-1" y="5" width="3" height="3" fill="#d11"/><path d="M3-4 6 1 3 4" stroke="#445" fill="none"/></g>
<g transform="translate(272 93)"><use href="#star" x="-1" y="-6"/><path d="M-8 8V2M8 8V2M-8 5H8" stroke="#111"/><path d="M-2-3h5l2 3H-4Z" fill="#222"/></g><use href="#dd" x="289" y="94"/>
<g transform="translate(306 93)"><use href="#star" x="-3" y="-4"/><path d="M-8 8 2 0M-5 9 5 1" stroke="#7f9cc8" stroke-width="1.200"/><text x="1" y="-4" font-size="7" font-family="Liberation Serif" fill="#333">XX</text></g>
<g transform="translate(336 93)"><path d="M-7-6H7V6H-7Z" fill="none" stroke="#445" stroke-dasharray="1 1"/><use href="#star" x="-5" y="-5"/><rect x="5" y="-8" width="3" height="3" fill="#334"/><rect x="-8" y="5" width="3" height="3" fill="#334"/><rect x="5" y="5" width="3" height="3" fill="#334"/></g>
<g transform="translate(368 93)"><rect x="-8" y="-8" width="7" height="4" fill="#eee" stroke="#444"/><rect x="-8" y="4" width="7" height="4" fill="#eee" stroke="#444"/><path d="M-1-6h5v4M-1 6h5V2" fill="none" stroke="#444"/><rect x="3" y="-2" width="6" height="4" fill="#3a90e0" stroke="#248"/></g><use href="#dd" x="385" y="94"/>
<g transform="translate(412 93)"><path d="M-7-3 2-8 8-5V3L0 7l-7-3Z" fill="#8a6a50" stroke="#333"/><path d="M-5-1 4 4M-2-5 6 0" stroke="#ddd"/><circle cx="-6" cy="6" r="2" fill="none" stroke="#333"/><circle cx="6" cy="7" r="2" fill="none" stroke="#333"/></g>
<g transform="translate(434 93)"><circle cx="-1" cy="-1" r="6" fill="#dce8f6" stroke="#3a6ea5" stroke-width="1.500"/><path d="M3 3l5 5" stroke="#3a6ea5" stroke-width="2.500"/><path d="M4-8v5M2-6h5" stroke="#d22"/></g>
<g transform="translate(457 93)"><circle cx="-1" cy="-1" r="6" fill="#dce8f6" stroke="#3a6ea5" stroke-width="1.500"/><path d="M3 3l5 5" stroke="#3a6ea5" stroke-width="2.500"/><path d="M-3-8 6 1M6-8-3 1" stroke="#d22" stroke-width="1.500"/></g>
<g transform="translate(479 93)" fill="#d5dfee" stroke="#5d6f8c" stroke-width="1.400"><path d="M-8-3-4-7H8V3L4 7H-8Z"/><rect x="-4" y="-3" width="8" height="7" fill="#eef3fa"/></g>
<g transform="translate(501 93)" fill="#d5dbe4" stroke="#8d97a8"><path d="M-7 0h9v7h-9ZM-7 0l3-3h9l-3 3M2 7l3-3V-3"/><path d="M-1-4l3-4h6v7l-3 3" fill="#e5e9ef"/></g>
<g transform="translate(531 93)"><path d="M-8-5H8" stroke="#2a9a3a" stroke-width="2"/><path d="M-7 8V-3M8-3v11" stroke="#2f55c8" stroke-width="1.500"/><path d="M5-8 9-5 5-2" fill="#2a9a3a"/><text x="-4" y="8" font-size="11" fill="#222" font-family="Liberation Sans">X</text></g>
<g transform="translate(553 93)"><path d="M-8-5H8" stroke="#d22" stroke-width="2"/><path d="M-7 8V-3M8-3v11" stroke="#2f55c8" stroke-width="1.500"/><text x="-4" y="8" font-size="11" fill="#222" font-family="Liberation Sans">Y</text></g>
<g transform="translate(575 93)"><path d="M-8-5H8" stroke="#d22" stroke-width="2"/><path d="M-7 8V-3" stroke="#2a9a3a" stroke-width="1.500"/><path d="M8-3v11" stroke="#2f55c8" stroke-width="1.500"/><text x="-4" y="8" font-size="11" fill="#222" font-family="Liberation Sans">Z</text></g>
<g transform="translate(597 93)"><path d="M-8-5H8" stroke="#2a9a3a" stroke-width="2"/><path d="M-2-4V8" stroke="#2f55c8"/><path d="M7-3v10" stroke="#2f55c8" stroke-width="1.500"/><circle cx="6" cy="-6" r="2.500" fill="#c21"/><text x="-9" y="8" font-size="11" fill="#222" font-family="Liberation Sans">-X</text></g><use href="#dd" x="615" y="94"/>
<g transform="translate(633 93)"><rect x="-8" y="-7" width="7" height="6" fill="#f7ec6e" stroke="#333"/><path d="M-7 8h14" stroke="#222" stroke-width="2"/><path d="M4-7-3 5M1-5 7 1" stroke="#111" stroke-width="2"/></g><use href="#dd" x="650" y="94"/>
<g transform="translate(676 93)"><path d="M-7-3-2-7 4-5 8 0 7 8 0 5-7 3Z" fill="#a5b1c8" stroke="#4e5e7e"/><path d="M-2-7 0 0 7 8M0 0-7 3" stroke="#4e5e7e" fill="none"/></g><use href="#dd" x="693" y="94"/>
<g transform="translate(722 93)" fill="none"><path d="M-7 8-5-6H6L7 8" stroke="#9ab0a0" stroke-width="1.500"/><path d="M-5-6 1 0 6-6" stroke="#999" stroke-dasharray="2 1"/><circle cx="-5" cy="-6" r="1.300" fill="#d77"/><circle cx="6" cy="-6" r="1.300" fill="#7c7"/></g>
<g transform="translate(743 93)"><rect x="-7" y="-4" width="14" height="8" rx="4" fill="#d5d5d5" stroke="#aaa"/><path d="M-3 0h2" stroke="#d33"/><path d="M0 0h2" stroke="#dd4"/><path d="M3 0h2" stroke="#44d"/></g>
<g transform="translate(772 93)"><path d="M-3-7H3M0-7v7M-3 0H3" stroke="#8890a0" stroke-width="1.200"/><use href="#forces" y="1"/></g>
<g font-family="Liberation Sans" font-size="9" fill="#8a8f9b" text-anchor="middle">
<g transform="translate(795 93)"><path d="M-8-3H8" stroke="#8a90dd" stroke-width="3.500"/><path d="M-8-.5H8" stroke="#aaa"/><text y="9" font-size="10">N</text></g>
<g transform="translate(818 93)"><use href="#forces" y="-7"/><text y="8" x="1">Vy</text></g>
<g transform="translate(840 93)"><use href="#forces" y="-7"/><text y="8" x="1">Vz</text></g>
<g transform="translate(862 93)"><use href="#forces" y="-7"/><text y="8" x="1">Mт</text></g>
<g transform="translate(884 93)"><use href="#forces" y="-7"/><text y="8" x="1">My</text></g>
<g transform="translate(906 93)"><use href="#forces" y="-7"/><text y="8" x="1">Mz</text></g>
<g transform="translate(928 93)"><path d="M-8-4 8-3V-1L-8-4" fill="#b0b0e8" stroke="#8a90dd"/><text y="8" x="1">py</text></g>
<g transform="translate(950 93)"><path d="M-8-4 8-3V-1L-8-4" fill="#b0b0e8" stroke="#8a90dd"/><text y="8" x="1">pz</text></g>
</g>
<g transform="translate(980 93)"><path d="M-7-1q6-6 12 0Z" fill="#5fb878"/><circle cx="-1" cy="-5" r="3" fill="#5fb878"/><path d="M-1 8V1M-4 4l3-3 3 3" stroke="#2fa84a" stroke-width="2" fill="none"/><path d="M9-6H3M5-9 2-6l3 3" stroke="#2fa84a" stroke-width="1.600" fill="none"/></g>
<g transform="translate(1002 93)"><path d="M-3-8h6M0-8v6M-3-2h6" stroke="#335"/><path d="M-8 7q4-9 8-3t8 0" stroke="#4a67d8" fill="none" stroke-width="1.200"/><path d="M-8 7H8" stroke="#d66"/></g>
<g transform="translate(1024 93)"><rect x="-8" y="-8" width="16" height="16" fill="#e8e8f0" stroke="#222"/><path d="M-8-3H8M-8 2H8M0-8V8" stroke="#222"/><path d="M-6-5h4M3-5h4M-6 5h4M3 0h4" stroke="#3a6fd8" stroke-width="1.500"/><path d="M-6 0h4M3 5h4" stroke="#d33" stroke-width="1.500"/></g>
<g transform="translate(1052 93)"><rect x="-6" y="-8" width="13" height="16" fill="#eee" stroke="#8a8f98"/><path d="M-2-5H5M-2-2H5M-2 1H5M-2 4H5" stroke="#9aa"/><path d="M-5-5h2" stroke="#d55"/><path d="M-5-2h2" stroke="#dc4"/><path d="M-5 1h2" stroke="#5a5"/><path d="M-5 4h2" stroke="#55d"/></g>

<!-- nav head icons -->
<path d="M278.500 112.500h4v5h-4ZM277 117.500h7M280.500 118v3" fill="none" stroke="#6a6e78"/><path d="M292 112l8 8M300 112l-8 8" stroke="#6a6e78" stroke-width="1.300"/>

<!-- tree lines -->
<g fill="none" stroke="#666" stroke-dasharray="1 1">
<path d="M16.500 146v8M35.500 166v534M54.500 186v187M54.500 402v61M54.500 566v131M73.500 580v27"/>
<path d="M20 157h8M39 175h8M39 391h8M39 481h8M39 499h8M39 517h8M39 535h8M39 553h8"/>
<path d="M58 193h9M58 211h9M58 229h9M54 247h13M54 265h13M54 283h13M58 301h9M58 319h9M54 337h13M54 355h13M54 373h13M58 409h9M54 427h11M54 445h11M54 463h11M58 571h8M73 589h11M73 607h11M54 625h11M54 643h11M54 661h11M54 679h11M54 697h11"/>
</g>
<use href="#minus" x="16.500" y="160"/><use href="#minus" x="35.500" y="178"/><use href="#minus" x="35.500" y="393"/><use href="#plus" x="35.500" y="482"/><use href="#plus" x="35.500" y="500"/><use href="#plus" x="35.500" y="536"/><use href="#minus" x="35.500" y="555"/>
<use href="#plus" x="54.500" y="195"/><use href="#plus" x="54.500" y="213"/><use href="#plus" x="54.500" y="231"/><use href="#plus" x="54.500" y="303"/><use href="#plus" x="54.500" y="321"/><use href="#plus" x="54.500" y="411"/><use href="#minus" x="54.500" y="573"/>
<use href="#flag" x="8" y="133"/>
<g transform="translate(28 150)"><rect x="6" y="0" width="10" height="15" fill="#e5e5e5" stroke="#777"/><rect x="0" y="2" width="9" height="9" fill="#6a9ad0"/><path d="M8 3h6M8 6h6M8 9h6M8 12h6" stroke="#777"/><rect x="1" y="11" width="4" height="3" fill="#3a9a4a"/></g>
<use href="#fopen" x="47" y="167"/><use href="#fopen" x="47" y="383"/><use href="#fopen" x="47" y="545"/><use href="#fopen" x="66" y="563"/>
<use href="#fold" x="48" y="473"/><use href="#fold" x="48" y="491"/><use href="#fold" x="48" y="509"/><use href="#fold" x="48" y="527"/>
<use href="#fold" x="67" y="185"/><use href="#fold" x="67" y="203"/><use href="#fold" x="67" y="221"/><use href="#fold" x="67" y="239"/><use href="#fold" x="67" y="257"/><use href="#fold" x="67" y="275"/><use href="#fold" x="67" y="293"/><use href="#fold" x="67" y="311"/><use href="#fold" x="67" y="329"/><use href="#fold" x="67" y="347"/><use href="#fold" x="67" y="365"/>
<rect x="73" y="192" width="3" height="3" fill="#c11"/><rect x="72" y="208" width="6" height="7" fill="#6a4aa0"/><rect x="75" y="208" width="3" height="3" fill="#3a3"/><path d="M71 235l2-6h5l-1 6Z" fill="#4f78d8"/><path d="M71 248h7M72 245v6" stroke="#c22"/><path d="M71 269l6-6" stroke="#a65" stroke-width="2"/><path d="M71 287l6-6" stroke="#652" stroke-width="1.500"/><path d="M71 305l6-6" stroke="#c33" stroke-width="1.500"/><path d="M71 324q3-6 6 0Z" fill="#292"/><path d="M71 338h7" stroke="#3a3" stroke-width="3"/><rect x="73" y="349" width="2" height="9" fill="#c33"/><path d="M71 377l5-6M72 372l5 5" stroke="#a53"/>
<g><path d="M65 418h14" stroke="#334" stroke-width="1.500"/><path d="M75 402v10" stroke="#3a6fd0" stroke-width="3"/><path d="M72 411h6l-3 4Z" fill="#3a6fd0"/></g>
<g stroke="#555" fill="#fff" stroke-width=".8"><rect x="65.500" y="422" width="6" height="3"/><rect x="65.500" y="431" width="6" height="3"/><rect x="65.500" y="440" width="6" height="3"/><rect x="65.500" y="449" width="6" height="3"/><path d="M72 423h5v3M72 432h5v-3M72 441h5v3M72 450h5v-3" fill="none"/></g>
<rect x="75" y="426" width="6" height="3" fill="#1aa03a"/><rect x="75" y="444" width="6" height="3" fill="#4a90e0"/>
<rect x="65" y="457" width="6" height="3" fill="#4a90e0"/><rect x="65" y="466" width="6" height="3" fill="#1aa03a"/><path d="M72 458h5v3M72 467h5v-3" stroke="#555" fill="none"/><rect x="75" y="462" width="6" height="3" fill="#c11"/>

<g fill="#e5e7ee" stroke-width="2"><rect x="85" y="584" width="13" height="13" stroke="#e0924a"/><rect x="85" y="602" width="13" height="13" stroke="#1bc8c8"/><rect x="66" y="620" width="13" height="13" stroke="#8a8aee"/><rect x="66" y="638" width="13" height="13" stroke="#8a8aee"/><rect x="66" y="656" width="13" height="13" stroke="#8a8aee"/><rect x="66" y="674" width="13" height="13" stroke="#8a8aee"/><rect x="66" y="692" width="13" height="13" stroke="#8a8aee"/></g>
<path d="M88 589l5-2 3 3-1 5h-7Z" fill="#8a5a3a"/><path d="M91 592h5M93 590v5" stroke="#d22" stroke-width="1.500"/>
<path d="M89 605h6M92 605v7M89 612h6" stroke="#2a6a4a" stroke-width="1.500"/>
<path d="M70 623h5M72.500 623v7M70 630h5" stroke="#334" stroke-width="1.500"/>
<g font-family="Liberation Sans" font-weight="bold" fill="#223" text-anchor="middle"><text x="72.500" y="650" font-size="8">EC</text><text x="72.500" y="668" font-size="7">AISC</text><text x="72.500" y="686" font-size="8">IS</text><text x="72.500" y="704" font-size="8">SIA</text></g>

<!-- scrollbar arrows -->
<g fill="none" stroke="#444" stroke-width="1.500"><path d="M290 142l3.500-3.500 3.500 3.500M290 698l3.500 3.500 3.500-3.500M16 714l-3.500 3.500 3.500 3.500M275 714l3.500 3.500-3.500 3.500"/></g>

<!-- nav tab icons -->
<g transform="translate(15 739)"><rect x="-7" y="-7" width="12" height="11" fill="#f5e277" stroke="#776"/><rect x="-5" y="-8" width="13" height="3" fill="#3a6fd8"/><circle cx="2" cy="3" r="3" fill="#cfe0f5" stroke="#345"/><path d="M4 5l3 3" stroke="#345" stroke-width="1.500"/></g>
<g transform="translate(69 739)"><path d="M-7-4-1-8 8-7V-3L-7-1Z" fill="#8a6a52" stroke="#333"/><rect x="-6" y="-3" width="12" height="11" fill="#e5e9f4" stroke="#335"/><path d="M-4 0h8M-4 2.500h8M-4 5h8" stroke="#4a6ec0"/></g>
<g transform="translate(140 739)"><path d="M-8 8H8L4 2-4 3Z" fill="#9aa5dd" stroke="#3a4a9a"/><path d="M-3 3 5-8" stroke="#5a6ac8" stroke-width="3"/></g>

<!-- diagram -->
<text font-family="Liberation Sans" font-size="9" fill="#0a1050" text-anchor="middle"><tspan x="536.500" y="218.500">2.100</tspan><tspan x="782.500" y="218.500">2.100</tspan><tspan x="1029.500" y="218.500">2.100</tspan></text>
<rect x="383.500" y="226" width="796" height="78" fill="#cdcde8" stroke="#5158a8" stroke-width="1.200"/>
<g stroke="#1f2a80" stroke-width="1.100"><path d="M383.500 226v74" stroke="#3a4296"/><path d="M459.500 226v74"/><path d="M535.500 226v74"/><path d="M611.500 226v74" stroke-width="1.500" stroke="#3a4296"/><path d="M687.500 226v74" stroke="#3a4296"/><path d="M750 226v74" stroke-width="1.700" stroke="#5158a8"/><path d="M813 226v74" stroke-width="1.700" stroke="#5158a8"/><path d="M876.500 226v74" stroke="#3a4296"/><path d="M952 226v74" stroke-width="1.500" stroke="#5158a8"/><path d="M1028 226v74" stroke="#3a4296"/><path d="M1103.500 226v74"/><path d="M1179.500 226v74"/></g>
<use href="#loadar" x="383.500" y="299"/><use href="#loadar" x="459.500" y="299"/><use href="#loadar" x="535.500" y="299"/><use href="#loadar" x="611.500" y="299"/><use href="#loadar" x="687.500" y="299"/><use href="#loadar" x="750" y="299"/><use href="#loadar" x="813" y="299"/><use href="#loadar" x="876.500" y="299"/><use href="#loadar" x="952" y="299"/><use href="#loadar" x="1028" y="299"/><use href="#loadar" x="1103.500" y="299"/><use href="#loadar" x="1179.500" y="299"/>
<rect x="533.500" y="224.500" width="3.500" height="3.500" fill="#1a237e"/><rect x="779.500" y="224.500" width="3.500" height="3.500" fill="#1a237e"/><rect x="1026.500" y="224.500" width="3.500" height="3.500" fill="#1a237e"/>
<rect x="383.500" y="325" width="796.500" height="19" fill="#f29a17"/>
<path d="M383.500 325h796.500M383.500 344h796.500" stroke="#f8c070"/>
<g fill="#fff"><rect x="542" y="322" width="138" height="12"/><rect x="570" y="334" width="83" height="15"/><rect x="760" y="322" width="137" height="12"/><rect x="787" y="334" width="83" height="15"/><rect x="1035" y="322" width="138" height="12"/><rect x="1063" y="334" width="82" height="15"/></g>
<g font-family="Liberation Sans" font-size="9.500" fill="#0000c8">
<text x="545" y="330.500" textLength="133" lengthAdjust="spacing">Topolové a jehličnaté dřevo C24</text><text x="573" y="346" textLength="78" lengthAdjust="spacing">T-obdélník 120/240</text>
<text x="763" y="330.500" textLength="133" lengthAdjust="spacing">Topolové a jehličnaté dřevo C24</text><text x="791" y="346" textLength="78" lengthAdjust="spacing">T-obdélník 120/240</text>
<text x="1038" y="330.500" textLength="133" lengthAdjust="spacing">Topolové a jehličnaté dřevo C24</text><text x="1066" y="346" textLength="78" lengthAdjust="spacing">T-obdélník 120/240</text></g>
<use href="#sup" x="383.500" y="341"/><use href="#sup" x="687.500" y="341"/><use href="#sup" x="876.500" y="341"/><use href="#sup" x="1179.500" y="341"/>
<path d="M668 368h39M857 368h39M1160 368h39" stroke="#55ee55" stroke-width="2"/>
<g stroke="#2a3a9a" stroke-width="1"><path d="M383.500 342v73M687.500 342v73M876.500 342v73M1179.500 342v73"/></g>
<g stroke="#1c2a8c" stroke-width="1"><path d="M384 410.500h120M565 410.500h122M688 410.500h70M806 410.500h70M877 410.500h121M1057 410.500h122"/></g>
<g fill="#1c2a8c"><path d="M384 410.500l8-2.500v5ZM687 410.500l-8-2.500v5ZM688 410.500l8-2.500v5ZM876 410.500l-8-2.500v5ZM877 410.500l8-2.500v5ZM1179 410.500l-8-2.500v5Z"/></g>
<g font-family="Liberation Sans" font-size="10.500" font-weight="bold" fill="#111" stroke="#111" stroke-width=".15"><text x="507" y="414.500" textLength="56">l_k=4.00 m</text><text x="761" y="414.500" textLength="42">l=2.50 m</text><text x="1000" y="414.500" textLength="55">l_k=4.00 m</text></g>

<!-- bottom panel header -->
<path d="M1250.500 526.500h4v5h-4ZM1249 531.500h7M1252.500 532v3" fill="none" stroke="#5a5e68"/><path d="M1266 527l8 8M1274 527l-8 8" stroke="#5a5e68" stroke-width="1.300"/>

<!-- bottom toolbar icons -->
<g transform="translate(330 553)"><use href="#tbl"/><path d="M-5 6 5 6 5-4Z" fill="#3aa04a" stroke="#1a6030"/></g>
<g transform="translate(352 553)"><use href="#tbl"/><path d="M-3 0v5M-5 3l2 3 2-3M1 1h6M4-2v6" stroke="#2a3f8a" fill="none" stroke-width="1.300"/></g>
<g transform="translate(374 553)"><use href="#tbl"/><path d="M-3-4H3V1H6L0 7-6 1H-3Z" fill="#5a8ad8" stroke="#2a4a9a"/></g>
<g transform="translate(396 553)"><use href="#tbl"/><path d="M-8 4 8-2" stroke="#d22" stroke-width="1.500"/><path d="M-8 5 0 2" stroke="#23c" stroke-width="1.500"/></g>
<g transform="translate(418 553)"><use href="#tbl"/><path d="M-7 1-4-3-2 4 0-3 2 4 4-2 7 1" stroke="#d22" fill="none"/></g>
<g transform="translate(448 553)"><use href="#tbl"/><path d="M-7 0-2-5V-2H7V2H-2V5Z" fill="#6a9ae0" stroke="#2a4a9a"/></g>
<g transform="translate(470 553)"><use href="#tbl"/><path d="M7 0 2-5V-2H-7V2H2V5Z" fill="#6a9ae0" stroke="#2a4a9a"/></g>
<g transform="translate(500 553)" fill="none" stroke="#223" stroke-width="1.500"><path d="M-5-6H0Q4-6 4-1T0 7"/><path d="M-2 4 0 8 3 5" stroke="#3a5ac0"/></g>
<g transform="translate(522 553)" fill="none" stroke="#223" stroke-width="1.500"><path d="M5-6H0Q-4-6-4-1T0 7"/><path d="M2 4 0 8-3 5" stroke="#3a5ac0"/></g>
<g transform="translate(552 553)"><rect x="-8" y="-6" width="16" height="12" fill="#dbdef2" stroke="#8a8fc8"/><path d="M-8-2H8M-8 2H8M-3-6V6M3-6V6" stroke="#8a8fc8"/></g>
<g transform="translate(574 553)"><rect x="-8" y="-6" width="16" height="13" fill="#ebe6c8" stroke="#bbb"/><path d="M-2 4 5-6" stroke="#dfba2a" stroke-width="2.500"/><path d="M-8 2H8" stroke="#ccc"/></g>
<path d="M789 551h6l-3 3Z M1048 551h6l-3 3Z" fill="#777"/>
<path d="M815 548 807 553l8 5Z M1074 548 1066 553l8 5Z" fill="#c3d2f0" stroke="#9cb0dc"/>
<path d="M829 548l8 5-8 5Z" fill="#c3d2f0" stroke="#9cb0dc"/><path d="M1088 548l8 5-8 5Z" fill="#3f6fd8" stroke="#2d54b0"/>
<g transform="translate(1122 553)"><path d="M-7-6V8M-7 4H8" stroke="#aaa"/><path d="M-7 4Q-4-3 0 2T8 3" stroke="#e07a80" fill="none"/><path d="M3-8v7M1-6h4" stroke="#667" /></g>
<g transform="translate(1152 553)"><rect x="-1" y="-8" width="10" height="7" fill="#fff" stroke="#667"/><rect x="-1" y="-8" width="10" height="2" fill="#667"/><path d="M-8-3H3L-1 3V8L-4 7V3Z" fill="#7faee0" stroke="#446"/></g>
<g transform="translate(1175 553)"><circle cx="4" cy="-4" r="4.500" fill="#5a6f92"/><text x="2.500" y="-.5" font-size="8" fill="#fff" font-family="Liberation Serif" font-weight="bold">i</text><path d="M-8 1H-2M-5 1V7M-8 7H-2" stroke="#c25050" stroke-width="1.300"/><path d="M-2 3 7 0V4L-1 8Z" fill="#c8ccd4"/></g>
<g transform="translate(1196 553)"><path d="M-7-7V7" stroke="#444"/><rect x="-6" y="-7" width="8" height="3" fill="#e88585" stroke="#a33" stroke-width=".5"/><rect x="-6" y="-3" width="4" height="3" fill="#8ccb7a" stroke="#494" stroke-width=".5"/><rect x="-6" y="1" width="12" height="3" fill="#8ccb7a" stroke="#494" stroke-width=".5"/><rect x="-6" y="5" width="7" height="2.500" fill="#e88585" stroke="#a33" stroke-width=".5"/></g>
<g transform="translate(1219 553)"><rect x="-8" y="-8" width="16" height="16" fill="#e5f2e5" stroke="#1f6a30" stroke-width="1.500"/><path d="M-5-4h4l2 3 2-3h3L1 1l4 4H1L-1 2-3 5H-6L-2 1Z" fill="#1f8a3a"/></g>
<g transform="translate(1240 553)"><rect x="-7" y="-7" width="15" height="14" rx="2" fill="#55585f" stroke="#333"/><rect x="-4" y="-5" width="9" height="3" fill="#c8ccd4"/><path d="M-5 0h2M-2 0h2M1 0h2M4 0h2M-5 3h2M-2 3h2M1 3h2M4 3h2" stroke="#eee"/></g>
<g transform="translate(1262 553)"><rect x="-8" y="-7" width="16" height="5" fill="#4ca85a"/><path d="M-6-7v2M-3-7v2M0-7v2M3-7v2M6-7v2" stroke="#eee"/><text x="-8" y="6" font-size="8.500" font-weight="bold" font-family="Liberation Sans" fill="#223">0.<tspan fill="#2a3a9a">00</tspan></text><path d="M-1 8H8" stroke="#2a3a9a"/></g>
<!-- status grip -->
<g fill="#eee"><rect x="1276" y="768" width="1.500" height="1.500"/><rect x="1272" y="768" width="1.500" height="1.500"/><rect x="1276" y="764" width="1.500" height="1.500"/></g>
</svg>
</body></html>
